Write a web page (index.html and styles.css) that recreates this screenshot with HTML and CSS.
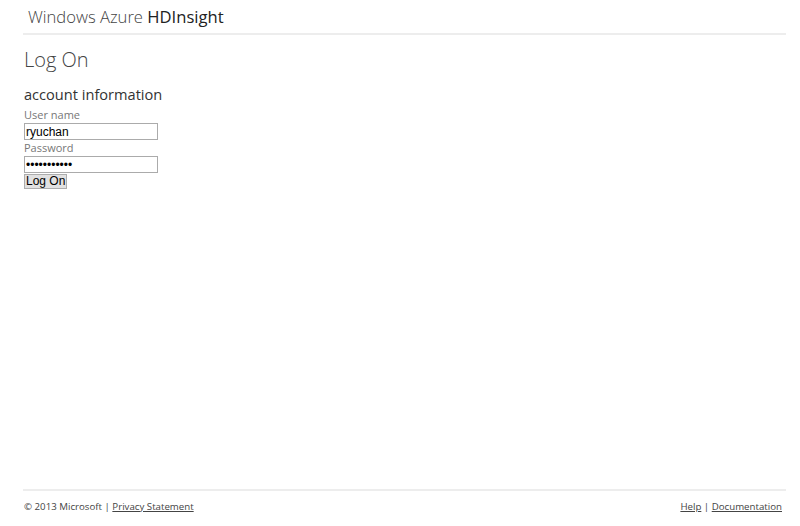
FILE: index.html
```html
<!DOCTYPE html>
<html>
<head>
<meta charset="utf-8">
<link rel="stylesheet" href="styles.css">
</head>
<body>
<div class="page">
  <header class="site-header">
    <span class="brand-light">Windows Azure</span> <span class="brand-bold">HDInsight</span>
  </header>
  <main class="main">
    <h1 class="title">Log On</h1>
    <h2 class="section">account information</h2>
    <form class="form">
      <label class="label">User name</label>
      <input class="field" type="text" value="ryuchan">
      <label class="label">Password</label>
      <input class="field" type="password" value="ryuchan1234">
      <button class="btn" type="button">Log On</button>
    </form>
  </main>
  <footer class="site-footer">
    <div class="foot-left">© 2013 Microsoft | <a href="#">Privacy Statement</a></div>
    <div class="foot-right"><a href="#">Help</a> | <a href="#">Documentation</a></div>
  </footer>
</div>
</body>
</html>
```
FILE: styles.css
```css
html, body {
  margin: 0;
  padding: 0;
  background: #fff;
}
body {
  font-family: "Open Sans", "Noto Sans", sans-serif;
  color: #333;
}
.page {
  width: 763px;
  margin-left: 23px;
  height: 526px;
  display: flex;
  flex-direction: column;
}
.site-header {
  height: 35px;
  box-sizing: border-box;
  padding: 5px 0 0 5px;
  font-size: 16.6px;
  border-bottom: 2px solid #ededed;
  color: #555;
}
.brand-light {
  font-weight: 300;
  color: #444;
}
.brand-bold {
  font-weight: 400;
  color: #222;
}
.main {
  flex: 1;
  padding-left: 1px;
}
.title {
  margin: 11px 0 0;
  font-size: 20px;
  font-weight: 300;
  color: #444;
  line-height: 28px;
}
.section {
  margin: 10px 0 0;
  font-size: 14.6px;
  font-weight: 400;
  color: #333;
  line-height: 20px;
}
.form {
  display: flex;
  flex-direction: column;
  align-items: flex-start;
  margin-top: 3px;
}
.label {
  font-size: 11px;
  color: #777;
  line-height: 14px;
  margin-top: 1px;
}
.field {
  width: 134px;
  height: 17px;
  box-sizing: border-box;
  border: 1px solid #ababab;
  padding: 0 1px;
  margin: 1px 0 0 0;
  font-family: "Liberation Sans", Arial, sans-serif;
  font-size: 12px;
  color: #000;
}
.btn {
  margin: 1px 0 0 0;
  height: 15px;
  padding: 0 1px;
  font-family: "Liberation Sans", Arial, sans-serif;
  font-size: 12px;
  line-height: 13px;
  background: #e1e1e1;
  border: 1px solid #adadad;
  color: #000;
}
.site-footer {
  height: 37px;
  box-sizing: border-box;
  border-top: 2px solid #ededed;
  display: flex;
  justify-content: space-between;
  padding: 9px 4px 0 1px;
  font-size: 9.7px;
  color: #444;
}
.site-footer a {
  color: #444;
  text-decoration: underline;
}
```
